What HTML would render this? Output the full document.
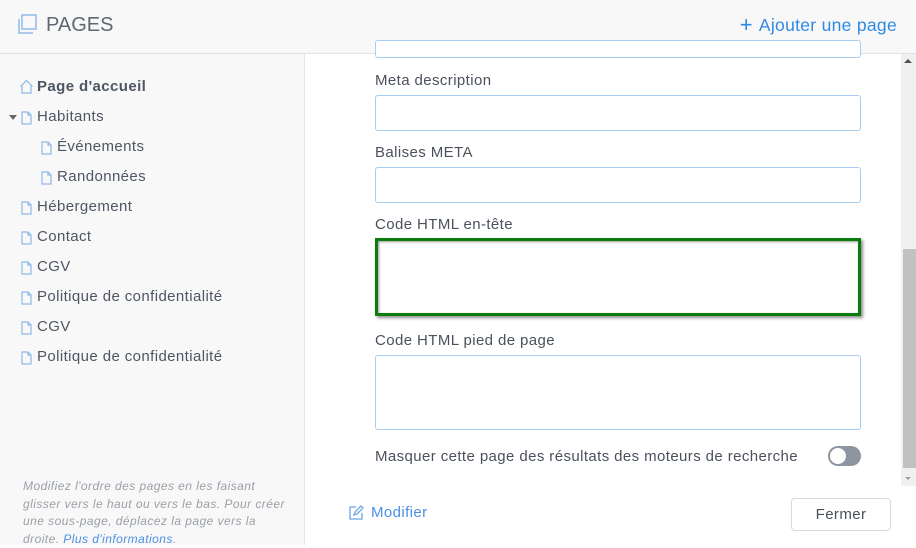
<!DOCTYPE html>
<html><head><meta charset="utf-8"><style>
*{margin:0;padding:0;box-sizing:border-box}
body{width:916px;height:545px;overflow:hidden;background:#fff;font-family:"Liberation Sans",sans-serif;color:#4a515c;position:relative}
.hdr{position:absolute;left:0;top:0;width:916px;height:54px;background:#f8f8f8;border-bottom:1px solid #dfe3e8}
.hdr .t{position:absolute;left:46px;top:14px;font-size:20px;color:#5f6772;letter-spacing:0px}
.hdr .add{position:absolute;right:19px;top:11px;font-size:17.5px;color:#2f8ae5;letter-spacing:0.3px}
.side{position:absolute;left:0;top:54px;width:305px;height:491px;background:#f8f8f8;border-right:1px solid #e3e6ea}
.it{position:absolute;font-size:15px;color:#4e5663;white-space:nowrap;letter-spacing:0.4px}
.it svg{position:absolute;left:-16px;top:3px}
.note{position:absolute;left:23px;top:478px;width:265px;font-size:12px;line-height:17.5px;font-style:italic;color:#9aa0a8;letter-spacing:0.45px}
.note span{color:#4a90e2}
.lbl{position:absolute;left:375px;font-size:15px;color:#4a515c;letter-spacing:0.4px}
.inp{position:absolute;left:375px;width:486px;border:1px solid #a9cdf0;border-radius:3px;background:#fff}
.sb{position:absolute;left:901px;top:54px;width:15px;height:432px;background:#f0f0f0}
.thumb{position:absolute;left:903px;top:249px;width:13px;height:219px;background:#c1c1c1}
</style></head><body>
<div class="hdr">
<svg style="position:absolute;left:16px;top:14px" width="22" height="22" viewBox="0 0 22 22" fill="none" stroke="#8fb9e8" stroke-width="1.5"><rect x="6" y="1" width="14" height="14"/><path d="M3 5v14h14"/></svg>
<div class="t">PAGES</div>
<div class="add"><span style="font-size:22px;position:relative;top:1px;margin-right:6px">+</span>Ajouter une page</div>
</div>
<div class="side">
<div class="it" style="left:37px;top:24px;font-weight:bold"><svg width="15" height="15" viewBox="0 0 15 15" fill="none" stroke="#8fb9e8" stroke-width="1.2" style="left:-18px;top:1px"><path d="M1.5 7.5L7.5 1.5l6 6M3 6.5V14h9V6.5"/></svg>Page d'accueil</div>
<div class="it" style="left:37px;top:54px"><span style="position:absolute;left:-28px;top:7px;width:0;height:0;border-left:4px solid transparent;border-right:4px solid transparent;border-top:5px solid #666"></span><svg width="11" height="14" viewBox="0 0 11 14" fill="none" stroke="#8fb9e8" stroke-width="1.2"><path d="M1 1h6l3 3v9H1z M7 1v3h3"/></svg>Habitants</div>
<div class="it" style="left:57px;top:84px"><svg width="11" height="14" viewBox="0 0 11 14" fill="none" stroke="#8fb9e8" stroke-width="1.2"><path d="M1 1h6l3 3v9H1z M7 1v3h3"/></svg>Événements</div>
<div class="it" style="left:57px;top:114px"><svg width="11" height="14" viewBox="0 0 11 14" fill="none" stroke="#8fb9e8" stroke-width="1.2"><path d="M1 1h6l3 3v9H1z M7 1v3h3"/></svg>Randonnées</div>
<div class="it" style="left:37px;top:144px"><svg width="11" height="14" viewBox="0 0 11 14" fill="none" stroke="#8fb9e8" stroke-width="1.2"><path d="M1 1h6l3 3v9H1z M7 1v3h3"/></svg>Hébergement</div>
<div class="it" style="left:37px;top:174px"><svg width="11" height="14" viewBox="0 0 11 14" fill="none" stroke="#8fb9e8" stroke-width="1.2"><path d="M1 1h6l3 3v9H1z M7 1v3h3"/></svg>Contact</div>
<div class="it" style="left:37px;top:204px"><svg width="11" height="14" viewBox="0 0 11 14" fill="none" stroke="#8fb9e8" stroke-width="1.2"><path d="M1 1h6l3 3v9H1z M7 1v3h3"/></svg>CGV</div>
<div class="it" style="left:37px;top:234px"><svg width="11" height="14" viewBox="0 0 11 14" fill="none" stroke="#8fb9e8" stroke-width="1.2"><path d="M1 1h6l3 3v9H1z M7 1v3h3"/></svg>Politique de confidentialité</div>
<div class="it" style="left:37px;top:264px"><svg width="11" height="14" viewBox="0 0 11 14" fill="none" stroke="#8fb9e8" stroke-width="1.2"><path d="M1 1h6l3 3v9H1z M7 1v3h3"/></svg>CGV</div>
<div class="it" style="left:37px;top:294px"><svg width="11" height="14" viewBox="0 0 11 14" fill="none" stroke="#8fb9e8" stroke-width="1.2"><path d="M1 1h6l3 3v9H1z M7 1v3h3"/></svg>Politique de confidentialité</div>
</div>
<div class="note">Modifiez l'ordre des pages en les faisant glisser vers le haut ou vers le bas. Pour créer une sous-page, déplacez la page vers la droite. <span>Plus d'informations</span>.</div>

<div class="inp" style="top:40px;height:18px"></div>
<div class="lbl" style="top:72px">Meta description</div>
<div class="inp" style="top:95px;height:36px"></div>
<div class="lbl" style="top:144px">Balises META</div>
<div class="inp" style="top:167px;height:36px"></div>
<div class="lbl" style="top:216px">Code HTML en-tête</div>
<div style="position:absolute;left:375px;top:238px;width:486px;height:78px;border:3px solid #0a7d0a;box-shadow:2px 2px 3px rgba(0,0,0,0.45), inset 1px 1px 2px rgba(0,0,0,0.4);background:#fff"></div>
<div class="lbl" style="top:332px">Code HTML pied de page</div>
<div class="inp" style="top:355px;height:75px"></div>
<div class="lbl" style="top:448px">Masquer cette page des résultats des moteurs de recherche</div>
<div style="position:absolute;left:828px;top:446px;width:33px;height:20px;border-radius:10px;background:#8d969f"><div style="position:absolute;left:2px;top:2px;width:16px;height:16px;border-radius:50%;background:#fff"></div></div>
<div class="sb"></div>
<div class="thumb"></div>
<div style="position:absolute;left:904px;top:59px;width:0;height:0;border-left:4px solid transparent;border-right:4px solid transparent;border-bottom:4px solid #505050"></div>
<div style="position:absolute;left:905px;top:477px;width:0;height:0;border-left:3px solid transparent;border-right:3px solid transparent;border-top:3px solid #a0a0a0"></div>

<svg style="position:absolute;left:348px;top:505px" width="16" height="16" viewBox="0 0 16 16" fill="none" stroke="#6aa6e6" stroke-width="1.3"><path d="M8 2H2v12h12V8"/><path d="M6 10l1-3 6-6 2 2-6 6z"/></svg>
<div style="position:absolute;left:371px;top:504px;font-size:15px;color:#4a90e2;letter-spacing:0.4px">Modifier</div>
<div style="position:absolute;left:791px;top:498px;width:100px;height:33px;border:1px solid #d6dade;border-radius:4px;font-size:15px;color:#4a515c;text-align:center;line-height:31px;letter-spacing:0.4px">Fermer</div>
</body></html>
